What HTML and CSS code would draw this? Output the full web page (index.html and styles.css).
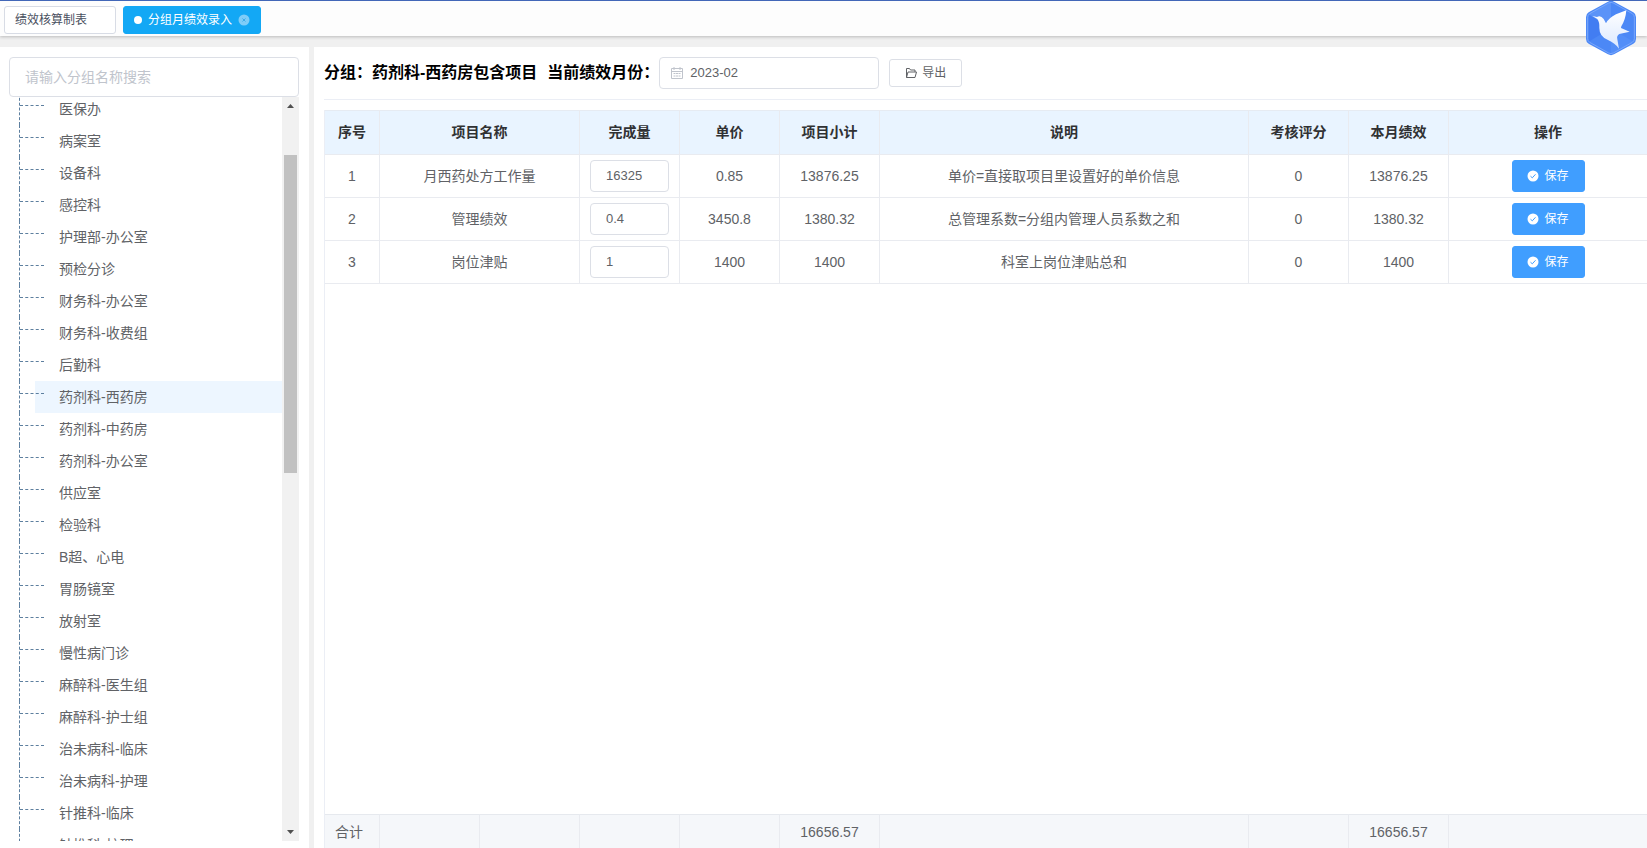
FILE: index.html
```
<!DOCTYPE html>
<html lang="zh-CN">
<head>
<meta charset="utf-8">
<title>分组月绩效录入</title>
<link rel="stylesheet" href="styles.css">
</head>
<body>
<header class="topbar">
  <nav class="tabs">
    <a class="tab" href="#report">绩效核算制表</a>
    <a class="tab tab-active" href="#entry"><span class="tab-dot"></span>分组月绩效录入<svg class="tab-close" viewBox="0 0 12 12"><circle cx="6" cy="6" r="5.5"/><path d="M4.500 4.500l3 3M7.500 4.500l-3 3"/></svg></a>
  </nav>
  <svg class="logo" viewBox="0 0 150 168">
    <defs><linearGradient id="bird" x1="0" y1="0" x2="0" y2="1"><stop offset="0" stop-color="#fff"/><stop offset="1" stop-color="#dbe8ff"/></linearGradient></defs>
    <path fill="#4c88f6" d="M66 5Q75 0 84 5L142 37Q150 42 150 51V117Q150 126 142 131L84 163Q75 168 66 163L8 131Q0 126 0 117V51Q0 42 8 37Z"/>
    <path fill="#427df2" d="M75 84L8 125V44Z"/><path fill="#5b93f8" d="M75 84L8 42 75 5Z"/><path fill="#538ef8" d="M75 84L142 125 75 162Z"/>
    <path fill="none" stroke="#8fb6fd" stroke-width="2" d="M68 9Q75 5 82 9L139 41Q145 45 145 52V116Q145 123 139 127L82 159Q75 163 68 159L11 127Q5 123 5 116V52Q5 45 11 41Z"/>
    <path fill="url(#bird)" d="M19 48L33 51Q44 45 53 57L60 70Q68 54 90 43L121 31Q119 58 106 79L105 84L131 95L100 102Q91 107 94 118L99 146Q87 129 66 120Q40 110 40 84Q41 66 34 57Z"/>
  </svg>
</header>
<main class="workspace">
  <aside class="sidebar">
    <input class="search" type="text" placeholder="请输入分组名称搜索" aria-label="搜索分组">
    <div class="tree-box">
      <ul class="tree">
        <li>医保办</li><li>病案室</li><li>设备科</li><li>感控科</li><li>护理部-办公室</li><li>预检分诊</li><li>财务科-办公室</li><li>财务科-收费组</li><li>后勤科</li><li class="selected">药剂科-西药房</li><li>药剂科-中药房</li><li>药剂科-办公室</li><li>供应室</li><li>检验科</li><li>B超、心电</li><li>胃肠镜室</li><li>放射室</li><li>慢性病门诊</li><li>麻醉科-医生组</li><li>麻醉科-护士组</li><li>治未病科-临床</li><li>治未病科-护理</li><li>针推科-临床</li><li>针推科-护理</li>
      </ul>
      <div class="scrollbar">
        <svg class="arrow" viewBox="0 0 17 17"><path d="M5 11h7L8.500 7z"/></svg>
        <div class="track"><div class="thumb"></div></div>
        <svg class="arrow" viewBox="0 0 17 17"><path d="M5 6h7L8.500 10z"/></svg>
      </div>
    </div>
  </aside>
  <section class="content">
    <div class="toolbar">
      <h1>分组：药剂科-西药房包含项目</h1>
      <label class="month-label" for="month">当前绩效月份：</label>
      <div class="month">
        <svg class="cal" viewBox="0 0 14 14"><path d="M1.500 2.500h11v10h-11zM1.500 5.500h11M4 1v3M10 1v3M3.500 7.500h2M6 7.500h2M8.500 7.500h2M3.500 10h2M6 10h2M8.500 10h2"/></svg>
        <input id="month" type="text" value="2023-02">
      </div>
      <button class="btn-export" type="button"><svg class="icon" viewBox="0 0 12 12"><path d="M1.500 10.500v-9h3l1 1.500h4.500v2M1.500 10.500l1.500-5.500h8.500l-1.500 5.500z"/></svg>导出</button>
    </div>
    <div class="grid">
      <table class="data">
        <colgroup><col class="c-no"><col class="c-m"><col class="c-m"><col class="c-m"><col class="c-m"><col class="c-m"><col><col class="c-m"><col class="c-m"><col class="c-op"></colgroup>
        <thead><tr><th>序号</th><th colspan="2">项目名称</th><th>完成量</th><th>单价</th><th>项目小计</th><th>说明</th><th>考核评分</th><th>本月绩效</th><th>操作</th></tr></thead>
        <tbody>
          <tr><td>1</td><td colspan="2">月西药处方工作量</td><td><input class="qty" type="text" value="16325" aria-label="完成量"></td><td>0.85</td><td>13876.25</td><td>单价=直接取项目里设置好的单价信息</td><td>0</td><td>13876.25</td><td><button class="btn-save" type="button"><svg class="icon" viewBox="0 0 12 12"><circle cx="6" cy="6" r="5.500"/><path d="M3.500 6.200l1.800 1.600 3.200-3.500"/></svg>保存</button></td></tr>
          <tr><td>2</td><td colspan="2">管理绩效</td><td><input class="qty" type="text" value="0.4" aria-label="完成量"></td><td>3450.8</td><td>1380.32</td><td>总管理系数=分组内管理人员系数之和</td><td>0</td><td>1380.32</td><td><button class="btn-save" type="button"><svg class="icon" viewBox="0 0 12 12"><circle cx="6" cy="6" r="5.500"/><path d="M3.500 6.200l1.800 1.600 3.200-3.500"/></svg>保存</button></td></tr>
          <tr><td>3</td><td colspan="2">岗位津贴</td><td><input class="qty" type="text" value="1" aria-label="完成量"></td><td>1400</td><td>1400</td><td>科室上岗位津贴总和</td><td>0</td><td>1400</td><td><button class="btn-save" type="button"><svg class="icon" viewBox="0 0 12 12"><circle cx="6" cy="6" r="5.500"/><path d="M3.500 6.200l1.800 1.600 3.200-3.500"/></svg>保存</button></td></tr>
        </tbody>
      </table>
      <table class="data totals">
        <colgroup><col class="c-no"><col class="c-m"><col class="c-m"><col class="c-m"><col class="c-m"><col class="c-m"><col><col class="c-m"><col class="c-m"><col class="c-op"></colgroup>
        <tbody><tr><td class="sum-label">合计</td><td></td><td></td><td></td><td></td><td>16656.57</td><td></td><td></td><td>16656.57</td><td></td></tr></tbody>
      </table>
    </div>
  </section>
</main>
</body>
</html>
```
FILE: styles.css
```
* { box-sizing: border-box; }
body {
  margin: 0;
  height: 100vh;
  display: flex;
  flex-direction: column;
  overflow: hidden;
  background: #f0f0f0;
  color: #606266;
  font: 14px/20px "Liberation Sans", "Noto Sans CJK SC", sans-serif;
}
input, button { font: inherit; color: inherit; }
.topbar {
  position: relative;
  flex: none;
  height: 36px;
  padding: 5px 4px 0;
  background: #fdfdfd;
  border-top: 1px solid #4267b8;
  box-shadow: 0 1px 3px rgba(0, 0, 0, .22);
}
.tabs { display: flex; gap: 7px; }
.tab {
  display: flex;
  align-items: center;
  height: 28px;
  width: 112px;
  padding: 0 10px;
  border: 1px solid #d8dce5;
  border-radius: 3px;
  background: #fff;
  color: #495060;
  font-size: 12px;
  text-decoration: none;
  white-space: nowrap;
}
.tab-active { width: 138px; background: #13a8f5; border-color: #13a8f5; color: #fff; }
.tab-dot { width: 8px; height: 8px; margin-right: 6px; border-radius: 50%; background: #fff; }
.tab-close { width: 12px; height: 12px; margin-left: 6px; }
.tab-close circle { fill: #7fcdf8; }
.tab-close path { stroke: #3fabe6; fill: none; }
.logo { position: absolute; top: -1px; right: 11px; width: 50px; height: 56px; z-index: 2; }
.workspace { flex: 1; min-height: 0; display: flex; gap: 5px; padding-top: 11px; }
.sidebar {
  flex: none;
  width: 309px;
  padding: 10px 10px 7px 9px;
  display: flex;
  flex-direction: column;
  background: #fff;
}
.search {
  flex: none;
  height: 40px;
  width: 100%;
  padding: 0 15px;
  border: 1px solid #dcdfe6;
  border-radius: 4px;
  outline: none;
}
.search::placeholder { color: #c0c4cc; opacity: 1; }
.tree-box { flex: 1; min-height: 0; display: flex; overflow: hidden; }
.tree { flex: 1; margin: -4px 0 0; padding: 0 0 0 10px; list-style: none; }
.tree li {
  position: relative;
  height: 32px;
  padding-left: 39px;
  border-left: 1px dashed #5d7f9f;
  line-height: 32px;
}
.tree li::before {
  content: "";
  position: absolute;
  left: 0;
  top: 12px;
  width: 24px;
  border-top: 1px dashed #5d7f9f;
}
.tree .selected { background: linear-gradient(#edf6ff, #edf6ff) 15px 0 no-repeat; }
.scrollbar { flex: none; width: 17px; display: flex; flex-direction: column; background: #f1f1f1; }
.arrow { width: 17px; height: 17px; fill: #505050; }
.track { flex: 1; padding: 41px 2px 0; }
.thumb { height: 47.5%; background: #c1c1c1; }
.content {
  flex: 1;
  min-width: 0;
  display: flex;
  flex-direction: column;
  padding-left: 10px;
  background: #fff;
}
.toolbar {
  flex: none;
  display: flex;
  align-items: center;
  height: 53px;
  padding-bottom: 1px;
  border-bottom: 1px solid #ebeef5;
  color: #000;
}
.toolbar h1, .month-label { margin: 0; font-size: 16px; font-weight: 700; white-space: nowrap; }
.month-label { margin-left: 10px; }
.month {
  display: flex;
  align-items: center;
  gap: 6px;
  width: 220px;
  height: 32px;
  padding: 0 10px;
  border: 1px solid #dcdfe6;
  border-radius: 4px;
  color: #606266;
}
.month input { min-width: 0; flex: 1; border: 0; padding: 0; outline: none; font-size: 13px; }
.cal { width: 14px; height: 14px; fill: none; stroke: #c0c4cc; }
.icon { width: 12px; height: 12px; margin-right: 5px; fill: none; stroke: currentColor; }
.btn-export, .btn-save {
  display: inline-flex;
  align-items: center;
  justify-content: center;
  width: 73px;
  height: 28px;
  padding: 0;
  border: 1px solid #dcdfe6;
  border-radius: 3px;
  background: #fff;
  color: #606266;
  font-size: 12px;
}
.btn-export { margin-left: 10px; }
.btn-save { height: 32px; background: #409eff; border-color: #409eff; color: #fff; vertical-align: middle; }
.btn-save circle { fill: #fff; stroke: none; }
.btn-save path { stroke: #409eff; }
.grid {
  flex: 1;
  min-height: 0;
  margin-top: 10px;
  display: flex;
  flex-direction: column;
  justify-content: space-between;
  border-left: 1px solid #ebeef5;
}
.data { width: 100%; table-layout: fixed; border-collapse: separate; border-spacing: 0; text-align: center; }
.c-no { width: 55px; }
.c-m { width: 100px; }
.c-op { width: 198px; }
.data th, .data td { padding: 0; height: 43px; border-right: 1px solid #e9ebf0; border-bottom: 1px solid #e9ebf0; }
.data th { height: 45px; padding-bottom: 2px; background: #e9f4ff; border-top: 1px solid #e6ebf2; color: #303133; font-weight: 700; }
.data tr > :last-child { border-right: 0; }
.qty {
  display: block;
  width: 79px;
  height: 32px;
  margin: 0 auto;
  padding: 0 15px 2px;
  border: 1px solid #dcdfe6;
  border-radius: 4px;
  outline: none;
  font-size: 13px;
}
.totals td { height: 34px; background: #f5f7fa; border-top: 1px solid #e6e9ee; border-bottom: 0; }
.totals .sum-label { padding-left: 10px; text-align: left; }
```
